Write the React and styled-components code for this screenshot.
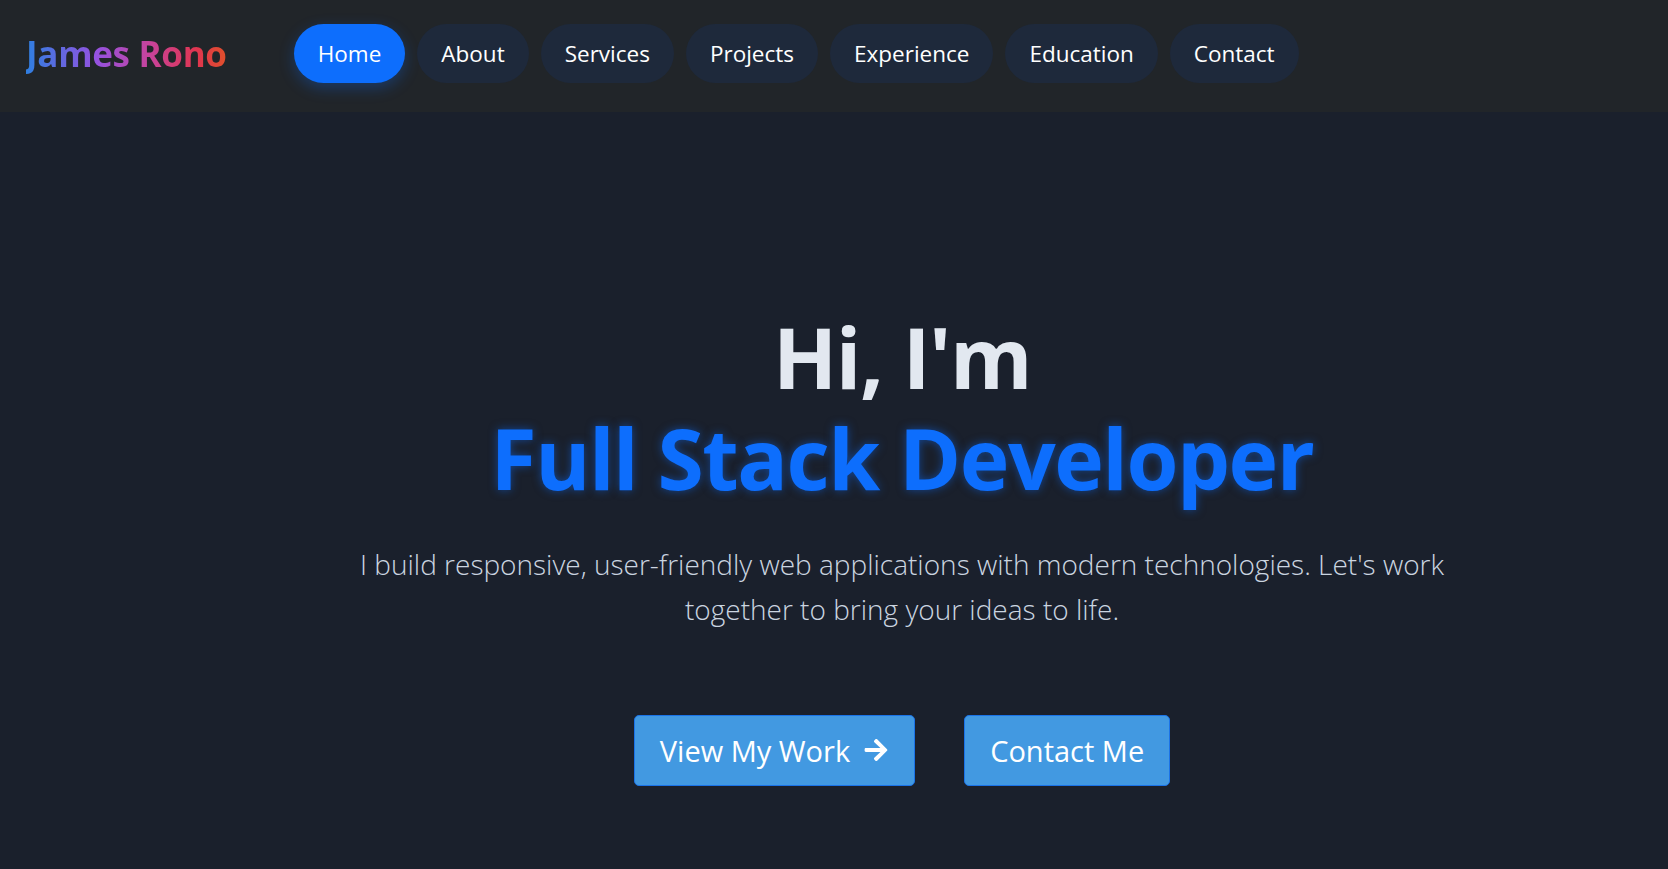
import React from "react";
import styled, { createGlobalStyle } from "styled-components";
import { FaArrowRight } from "react-icons/fa";

const Global = createGlobalStyle`
  html, body { margin: 0; padding: 0; }
  body {
    background: #1a202c;
    font-family: "Open Sans", "Noto Sans", sans-serif;
    color: #e2e8f0;
    overflow: hidden;
  }
  * { box-sizing: border-box; }
`;

const Navbar = styled.nav`
  display: flex;
  align-items: center;
  height: 112px;
  padding: 0 26px 5px;
  background: #212529;
`;

const Logo = styled.a`
  font-size: 35px;
  font-weight: 700;
  text-decoration: none;
  background: linear-gradient(90deg, #2f7fe0 0%, #9452e0 35%, #c8439a 62%, #e0354f 85%, #e0502a 100%);
  -webkit-background-clip: text;
  background-clip: text;
  color: transparent;
  letter-spacing: -0.3px;
`;

const NavList = styled.ul`
  display: flex;
  gap: 12px;
  list-style: none;
  margin: 0 0 0 67px;
  padding: 0;
`;

const Pill = styled.a`
  display: block;
  padding: 12px 24px 11px;
  border-radius: 30px;
  font-size: 22.5px;
  line-height: 36px;
  color: #ffffff;
  text-decoration: none;
  background: ${(p) => (p.$active ? "#0d6efd" : "#1e293b")};
  box-shadow: ${(p) => (p.$active ? "0 5px 15px rgba(13, 110, 253, 0.3)" : "none")};
`;

const Hero = styled.section`
  min-height: 100vh;
  display: flex;
  align-items: center;
  justify-content: center;
  padding-left: 136px;
  text-align: center;
`;

const Content = styled.div`
  display: flex;
  flex-direction: column;
  align-items: center;
`;

const Title = styled.h1`
  margin: 0 0 33px;
  font-size: 84px;
  font-weight: 700;
  line-height: 1.2;
  letter-spacing: -1.5px;
  color: #e2e8f0;
`;

const Accent = styled.span`
  display: block;
  color: #0d6efd;
  text-shadow: 0 0 10px rgba(13, 110, 253, 0.5);
`;

const Lead = styled.p`
  margin: 0 0 83px;
  max-width: 1100px;
  font-size: 28px;
  font-weight: 300;
  line-height: 1.6;
  color: #cbd5e0;
`;

const Actions = styled.div`
  display: flex;
  gap: 49px;
`;

const Button = styled.a`
  display: inline-flex;
  align-items: center;
  gap: 13px;
  padding: 13px 25px;
  border: 1px solid #1a73e8;
  border-radius: 5px;
  background: #4299e1;
  color: #ffffff;
  font-size: 29px;
  line-height: 43px;
  text-decoration: none;
`;

const links = ["Home", "About", "Services", "Projects", "Experience", "Education", "Contact"];

export default function App() {
  return (
    <>
      <Global />
      <Navbar>
        <Logo href="#">James Rono</Logo>
        <NavList>
          {links.map((l) => (
            <li key={l}>
              <Pill href="#" $active={l === "Home"}>{l}</Pill>
            </li>
          ))}
        </NavList>
      </Navbar>
      <Hero>
        <Content>
          <Title>
            Hi, I'm
            <Accent>Full Stack Developer</Accent>
          </Title>
          <Lead>
            I build responsive, user-friendly web applications with modern technologies. Let's work together to bring your ideas to life.
          </Lead>
          <Actions>
            <Button href="#">
              View My Work <FaArrowRight size={26} />
            </Button>
            <Button href="#">Contact Me</Button>
          </Actions>
        </Content>
      </Hero>
    </>
  );
}
